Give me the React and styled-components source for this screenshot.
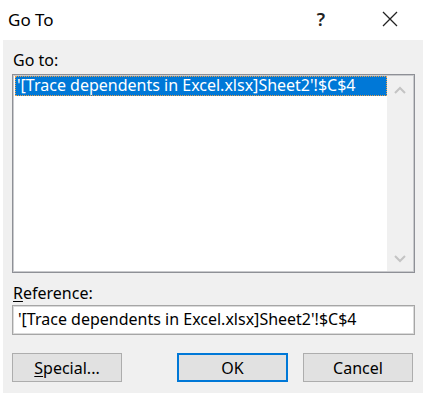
import styled, { createGlobalStyle } from 'styled-components';

const GlobalStyle = createGlobalStyle`
  html, body {
    margin: 0;
    padding: 0;
    background: #ffffff;
  }
  body {
    font-family: "Noto Sans", "Open Sans", sans-serif;
    color: #000;
  }
`;

const Window = styled.div`
  width: 424px;
  height: 393px;
  display: flex;
  flex-direction: column;
  background: #ffffff;
  overflow: hidden;
`;

const TitleBar = styled.div`
  height: 40px;
  display: flex;
  align-items: center;
  padding: 0 0 0 8px;
  flex-shrink: 0;
`;

const Title = styled.div`
  flex: 1;
  font-size: 17px;
  padding-bottom: 2px;
`;

const TitleButton = styled.div`
  width: ${(p) => p.$w}px;
  height: 40px;
  display: flex;
  align-items: center;
  justify-content: center;
  font-size: 18px;
  font-weight: 600;
  color: #222;
  padding-bottom: 2px;
  box-sizing: border-box;
`;

const Body = styled.div`
  flex: 1;
  margin: 0 1px 0 3px;
  background: #f0f0f0;
  padding: 9px 8px 0 9px;
  display: flex;
  flex-direction: column;
`;

const Label = styled.div`
  font-size: 16px;
  line-height: 22px;
  padding-left: 1px;
  margin-top: ${(p) => p.$mt || 0}px;
  margin-bottom: ${(p) => p.$mb || 0}px;
`;

const Mnemonic = styled.span`
  text-decoration: underline;
  text-underline-offset: 2px;
`;

const ListBox = styled.div`
  height: 199px;
  box-sizing: border-box;
  border: 1px solid #8e9096;
  box-shadow: inset 0 0 0 1px #c9cacd;
  background: #ffffff;
  display: flex;
`;

const ListItems = styled.div`
  flex: 1;
  padding: 1px 0 0 2px;
`;

const ListItem = styled.div`
  height: 20px;
  box-sizing: border-box;
  background: ${(p) => (p.$selected ? '#0078d7' : 'transparent')};
  color: ${(p) => (p.$selected ? '#ffffff' : '#000000')};
  border: 1px dotted ${(p) => (p.$selected ? '#e9a04a' : 'transparent')};
  font-size: 16px;
  line-height: 17px;
  padding-left: 1px;
  white-space: nowrap;
`;

const ScrollBar = styled.div`
  width: 26px;
  margin: 1px 1px 1px 0;
  background: #f0f0f0;
  display: flex;
  flex-direction: column;
  justify-content: space-between;
  align-items: center;
  padding: 10px 0 8px;
  box-sizing: border-box;
`;

const TextBox = styled.div`
  height: 30px;
  box-sizing: border-box;
  border: 1px solid #a6a6a6;
  box-shadow: inset 0 0 0 1px #dadada;
  background: #ffffff;
  font-size: 16px;
  line-height: 27px;
  padding-left: 5px;
  white-space: nowrap;
`;

const ButtonRow = styled.div`
  display: flex;
  align-items: center;
  margin-top: 18px;
`;

const Button = styled.div`
  width: ${(p) => p.$w || 110}px;
  height: 29px;
  box-sizing: border-box;
  background: #e1e1e1;
  border: ${(p) => (p.$default ? '2px solid #0078d7' : '1px solid #adadad')};
  display: flex;
  align-items: center;
  justify-content: center;
  font-size: 16px;
  margin-left: ${(p) => p.$ml || 0}px;
`;

const Chevron = ({ up }) => (
  <svg width="12" height="8" viewBox="0 0 12 8">
    <polyline
      points={up ? '1,7 6,2 11,7' : '1,1 6,6 11,1'}
      fill="none"
      stroke="#c4c4c4"
      strokeWidth="2"
    />
  </svg>
);

const CloseIcon = () => (
  <svg width="16" height="16" viewBox="0 0 16 16">
    <path d="M1 1 L15 15 M15 1 L1 15" stroke="#222" strokeWidth="1.3" fill="none" />
  </svg>
);

const ref = "'[Trace dependents in Excel.xlsx]Sheet2'!$C$4";

export default function App() {
  return (
    <>
      <GlobalStyle />
      <Window>
        <TitleBar>
          <Title>Go To</Title>
          <TitleButton $w={70}>?</TitleButton>
          <TitleButton $w={68}>
            <CloseIcon />
          </TitleButton>
        </TitleBar>
        <Body>
          <Label $mb={3}>Go to:</Label>
          <ListBox>
            <ListItems>
              <ListItem $selected>{ref}</ListItem>
            </ListItems>
            <ScrollBar>
              <Chevron up />
              <Chevron />
            </ScrollBar>
          </ListBox>
          <Label $mt={9} $mb={1}>
            <Mnemonic>R</Mnemonic>eference:
          </Label>
          <TextBox>{ref}</TextBox>
          <ButtonRow>
            <Button $w={110}>
              <span>
                <Mnemonic>S</Mnemonic>pecial...
              </span>
            </Button>
            <Button $w={111} $default $ml={55}>
              OK
            </Button>
            <Button $w={110} $ml={15}>
              Cancel
            </Button>
          </ButtonRow>
        </Body>
      </Window>
    </>
  );
}
